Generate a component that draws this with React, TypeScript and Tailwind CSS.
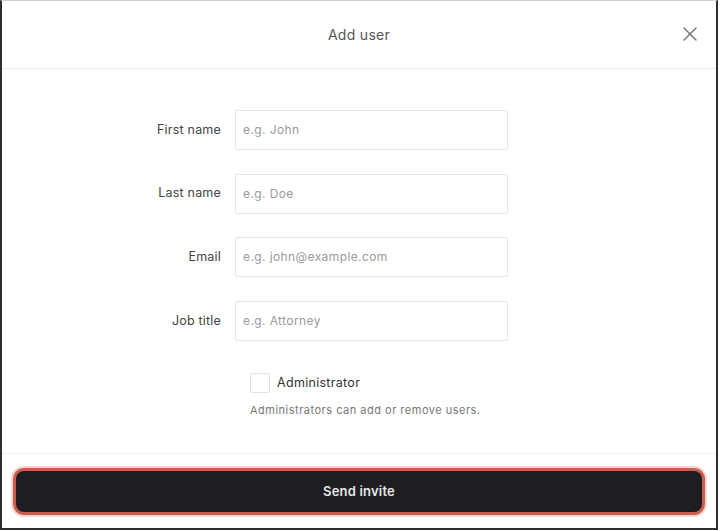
import React from "react";

const fields = [
  { label: "First name", placeholder: "e.g. John" },
  { label: "Last name", placeholder: "e.g. Doe" },
  { label: "Email", placeholder: "e.g. john@example.com" },
  { label: "Job title", placeholder: "e.g. Attorney" },
];

export default function App() {
  return (
    <div
      className="w-[718px] h-[530px] bg-white flex flex-col border-l-2 border-r-2 border-b-2 border-t border-[#2e2e2e] border-t-[#cfcfcf]"
      style={{ fontFamily: "Inter, 'Noto Sans', sans-serif" }}
    >
      <div className="relative h-[68px] shrink-0 border-b border-[#ececec] flex items-center justify-center">
        <span className="text-[14px] tracking-[0.3px] text-[#555]">Add user</span>
        <button className="absolute right-[18px] top-[25px] text-[#777]">
          <svg width="16" height="16" viewBox="0 0 16 16" fill="none" stroke="currentColor" strokeWidth="1.5" strokeLinecap="round">
            <path d="M2 2L14 14M14 2L2 14" />
          </svg>
        </button>
      </div>
      <div className="flex-1 pt-[41px]">
        <div className="flex flex-col gap-[23.7px]">
          {fields.map((f) => (
            <div key={f.label} className="flex items-center">
              <label className="w-[219px] text-right text-[12.5px] tracking-[0.2px] text-[#444]">{f.label}</label>
              <div className="ml-[14px] w-[273px] h-[40px] border border-[#e6e6e6] rounded-[2px] flex items-center px-[7px]">
                <span className="text-[12px] tracking-[0.4px] text-[#9a9a9a]">{f.placeholder}</span>
              </div>
            </div>
          ))}
        </div>
        <div className="ml-[248px] mt-[32px]">
          <div className="flex items-center gap-[7px]">
            <div className="w-[20px] h-[20px] border border-[#e2e2e2] rounded-[2px]" />
            <span className="text-[12.5px] tracking-[0.3px] text-[#333]">Administrator</span>
          </div>
          <div className="mt-[9px] text-[11px] tracking-[0.5px] text-[#777]">Administrators can add or remove users.</div>
        </div>
      </div>
      <div className="shrink-0 border-t border-[#efefef] px-[14px] pt-[17px] pb-[16px]">
        <button className="w-full h-[41px] rounded-[8px] bg-[#1e1e22] text-[13px] tracking-[0.2px] font-semibold text-[#e6e6e6] ring-[3px] ring-[#c8604d] shadow-[0_0_0_5px_rgba(225,140,120,0.35)]">
          Send invite
        </button>
      </div>
    </div>
  );
}
